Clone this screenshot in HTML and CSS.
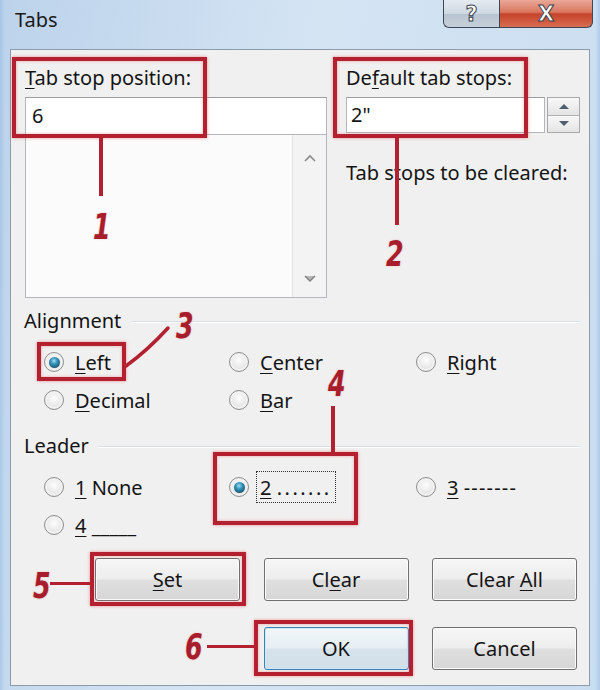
FILE: index.html
```html
<!DOCTYPE html>
<html>
<head>
<meta charset="utf-8">
<link rel="stylesheet" href="styles.css">
</head>
<body>
<div class="window">
  <div class="titlebar">
    <span class="title">Tabs</span>
    <div class="caption">
      <div class="cap-btn cap-help">?</div>
      <div class="cap-btn cap-close">X</div>
    </div>
  </div>
  <div class="panel">
    <div class="top">
      <div class="col">
        <span class="lbl"><u>T</u>ab stop position:</span>
        <div class="textbox">6</div>
        <div class="listbox">
          <div class="vscroll">
            <svg width="12" height="8" viewBox="0 0 12 8"><path d="M1 7 L6 2 L11 7" fill="none" stroke="#8a8a8a" stroke-width="1.6"/></svg>
            <svg width="12" height="8" viewBox="0 0 12 8"><path d="M1 1 H11 L6 6 Z" fill="#b8b8b8"/><path d="M1 1 L6 6 L11 1" fill="none" stroke="#7e7e7e" stroke-width="1.4"/></svg>
          </div>
        </div>
      </div>
      <div class="col">
        <span class="lbl">De<u>f</u>ault tab stops:</span>
        <div class="spinrow">
          <div class="textbox">2"</div>
          <div class="spinner">
            <span><svg width="12" height="7" viewBox="0 0 12 7"><path d="M1 6 L6 1 L11 6 Z" fill="#4f5f70"/></svg></span>
            <span><svg width="12" height="7" viewBox="0 0 12 7"><path d="M1 1 L6 6 L11 1 Z" fill="#4f5f70"/></svg></span>
          </div>
        </div>
        <div class="cleared">Tab stops to be cleared:</div>
      </div>
    </div>

    <div class="group-head first">Alignment</div>
    <div class="radios">
      <div class="radio"><span class="dot on"></span><span><u>L</u>eft</span></div>
      <div class="radio"><span class="dot"></span><span><u>C</u>enter</span></div>
      <div class="radio"><span class="dot"></span><span><u>R</u>ight</span></div>
      <div class="radio"><span class="dot"></span><span><u>D</u>ecimal</span></div>
      <div class="radio"><span class="dot"></span><span><u>B</u>ar</span></div>
    </div>

    <div class="group-head second">Leader</div>
    <div class="radios">
      <div class="radio"><span class="dot"></span><span><u>1</u> None</span></div>
      <div class="radio"><span class="dot on"></span><span class="focus"><u>2</u> <span class="dots">.......</span></span></div>
      <div class="radio"><span class="dot"></span><span><u>3</u> <span class="dashes">-------</span></span></div>
      <div class="radio"><span class="dot"></span><span><u>4</u> _____</span></div>
    </div>

    <div class="buttons">
      <div class="btn"><span><u>S</u>et</span></div>
      <div class="btn"><span>Cl<u>e</u>ar</span></div>
      <div class="btn"><span>Clear <u>A</u>ll</span></div>
      <div class="btn ok">OK</div>
      <div class="btn">Cancel</div>
    </div>
  </div>

  <div class="annot">
    <div class="rbox b1"></div>
    <div class="rbox b2"></div>
    <div class="rbox b3"></div>
    <div class="rbox b4"></div>
    <div class="rbox b5"></div>
    <div class="rbox b6"></div>
    <div class="rline l1"></div>
    <div class="rline l2"></div>
    <div class="rline l4"></div>
    <div class="rline l5"></div>
    <div class="rline l6"></div>
    <svg class="arrow3" width="60" height="52" viewBox="0 0 60 52"><path d="M6 46 Q 28 30 48 8" fill="none" stroke="#b3202f" stroke-width="3.5" stroke-linecap="round"/></svg>
    <span class="num n1">1</span>
    <span class="num n2">2</span>
    <span class="num n3">3</span>
    <span class="num n4">4</span>
    <span class="num n5">5</span>
    <span class="num n6">6</span>
  </div>
</div>
</body>
</html>
```
FILE: styles.css
```css
* { box-sizing: border-box; }

body {
  margin: 0;
  width: 600px;
  height: 690px;
  overflow: hidden;
  font-family: "Noto Sans", "DejaVu Sans", sans-serif;
  font-size: 20px;
  color: #141414;
}

.window {
  position: relative;
  width: 600px;
  height: 690px;
  background:
    linear-gradient(90deg, rgba(140, 180, 225, 0.45) 0, rgba(140, 180, 225, 0) 5px, rgba(140, 180, 225, 0) 595px, rgba(140, 180, 225, 0.45) 600px),
    linear-gradient(100deg, #bcd3eb 0%, #d4e4f3 45%, #c9ddf0 100%);
}

.titlebar {
  height: 49px;
  display: flex;
  align-items: flex-start;
}

.title {
  margin: 6px 0 0 15px;
  line-height: 28px;
  font-size: 20px;
  color: #1a1a1a;
}

.caption {
  margin-left: auto;
  margin-right: 7px;
  display: flex;
  height: 28px;
}

.cap-btn {
  height: 28px;
  display: flex;
  align-items: center;
  justify-content: center;
  border: 1px solid #3b4756;
  border-top: none;
  font-family: "DejaVu Sans", sans-serif;
  font-weight: bold;
  font-size: 21px;
  color: #ffffff;
  -webkit-text-stroke: 1px #3a4250;
}

.cap-help {
  width: 56px;
  border-right: none;
  border-radius: 0 0 0 6px;
  background: linear-gradient(#e4ebf2, #cfd8e1 50%, #b8c4d0 51%, #c6d0db);
}

.cap-close {
  width: 94px;
  border-radius: 0 0 6px 0;
  background: linear-gradient(#eaa898, #d9775f 45%, #c5432a 52%, #d86d52 100%);
}

.panel {
  margin: 0 10px;
  height: 637px;
  border: 1px solid #8d9aa8;
  background: #f0f0f0;
  padding: 16px 9px 0 14px;
}

.top {
  display: grid;
  grid-template-columns: 302px 1fr;
  column-gap: 19px;
}

.lbl {
  display: block;
  line-height: 24px;
  margin-bottom: 7px;
}

u {
  text-underline-offset: 3px;
  text-decoration-thickness: 1px;
}

.textbox {
  height: 38px;
  border: 1px solid #b4b6bc;
  border-top-color: #9a9ca3;
  background: #ffffff;
  padding-left: 6px;
  line-height: 36px;
}

.listbox {
  height: 163px;
  border: 1px solid #b4b6bc;
  border-top: none;
  background: #fbfbfb;
  display: flex;
  justify-content: flex-end;
}

.vscroll {
  width: 34px;
  background: #f3f3f3;
  border-left: 1px solid #e4e4e4;
  display: flex;
  flex-direction: column;
  justify-content: space-between;
  align-items: center;
  padding: 19px 0 14px;
}

.spinrow {
  display: flex;
  gap: 2px;
}

.spinrow .textbox {
  width: 199px;
  height: 36px;
  line-height: 34px;
  padding-left: 4px;
}

.spinner {
  width: 33px;
  height: 36px;
  border: 1px solid #a9a9a9;
  display: flex;
  flex-direction: column;
}

.spinner span {
  flex: 1;
  display: flex;
  align-items: center;
  justify-content: center;
  background: linear-gradient(#f8f8f8, #e4e4e4);
}

.spinner span + span {
  border-top: 1px solid #b0b0b0;
}

.cleared {
  margin-top: 28px;
  line-height: 24px;
}

.group-head {
  display: flex;
  align-items: center;
  line-height: 24px;
  margin-left: -1px;
}

.group-head::after {
  content: "";
  flex: 1;
  height: 1px;
  background: #d5dfe5;
  box-shadow: 0 1px 0 #ffffff;
  margin-left: 10px;
}

.group-head.first { margin-top: 11px; }
.group-head.second { margin-top: 15px; }

.radios {
  display: grid;
  grid-template-columns: 185px 187px 1fr;
  grid-auto-rows: 38px;
  padding-left: 19px;
  margin-top: 10px;
}

.radio {
  display: flex;
  align-items: center;
  gap: 11px;
}

.dot {
  flex: none;
  width: 20px;
  height: 20px;
  border-radius: 50%;
  border: 1px solid #8e8e8e;
  background: radial-gradient(circle at 50% 40%, #fdfdfd 0, #e8e8e8 55%, #cfcfcf 100%);
  box-shadow: inset 0 0 0 2px #f2f2f2;
  display: grid;
  place-items: center;
}

.dot.on::after {
  content: "";
  width: 11px;
  height: 11px;
  border-radius: 50%;
  background: radial-gradient(circle at 45% 35%, #a2e0f5 0, #3592bb 35%, #154c68 85%);
}

.focus {
  border: 1px dotted #333333;
  padding: 2px 3px 1px 3px;
  margin-left: -4px;
}

.dots { letter-spacing: 2.5px; }
.dashes { letter-spacing: 1.2px; }

.buttons {
  display: grid;
  grid-template-columns: repeat(3, 145px);
  grid-auto-rows: 43px;
  column-gap: 23.5px;
  row-gap: 26px;
  margin: 14px 0 0 70px;
}

.btn {
  border: 1px solid #707070;
  border-radius: 3px;
  background: linear-gradient(#f6f6f6 0%, #ededed 48%, #dfdfdf 52%, #d6d6d6 100%);
  box-shadow: inset 0 0 0 1px #fbfbfb;
  display: flex;
  align-items: center;
  justify-content: center;
}

.btn.ok {
  grid-column: 2;
  border-color: #3c7fb1;
  box-shadow: inset 0 0 0 1px #cdeaf8;
  background: linear-gradient(#f2f7fa, #e6eef4 48%, #d6e3ec 52%, #d1dfe9);
}

/* annotation overlay */
.annot {
  position: absolute;
  inset: 0;
  pointer-events: none;
}

.rbox {
  position: absolute;
  border: 4px solid #b3202f;
  box-shadow: 0 0 3px rgba(230, 80, 90, 0.6), inset 0 0 3px rgba(230, 80, 90, 0.5);
}

.b1 { left: 12px; top: 57px; width: 195px; height: 81px; }
.b2 { left: 333px; top: 57px; width: 195px; height: 81px; }
.b3 { left: 37px; top: 342px; width: 89px; height: 39px; }
.b4 { left: 213px; top: 452px; width: 145px; height: 73px; }
.b5 { left: 90px; top: 552px; width: 156px; height: 54px; }
.b6 { left: 254px; top: 620px; width: 159px; height: 56px; }

.rline {
  position: absolute;
  background: #b3202f;
}

.l1 { left: 99px; top: 136px; width: 4px; height: 60px; }
.l2 { left: 395px; top: 136px; width: 4px; height: 89px; }
.l4 { left: 331px; top: 406px; width: 4px; height: 48px; }
.l5 { left: 50px; top: 582px; width: 41px; height: 3px; }
.l6 { left: 207px; top: 645px; width: 48px; height: 3px; }

.arrow3 {
  position: absolute;
  left: 120px;
  top: 320px;
}

.num {
  position: absolute;
  font-family: "DejaVu Sans", sans-serif;
  font-weight: bold;
  font-style: italic;
  font-size: 36px;
  line-height: 1;
  color: #a81d2c;
  text-shadow: 0 0 2px rgba(230, 90, 100, 0.5);
  transform: scaleX(0.7);
  transform-origin: left top;
}

.n1 { left: 93px; top: 209px; }
.n2 { left: 386px; top: 236px; }
.n3 { left: 176px; top: 308px; }
.n4 { left: 328px; top: 366px; }
.n5 { left: 33px; top: 568px; }
.n6 { left: 185px; top: 629px; }
```
